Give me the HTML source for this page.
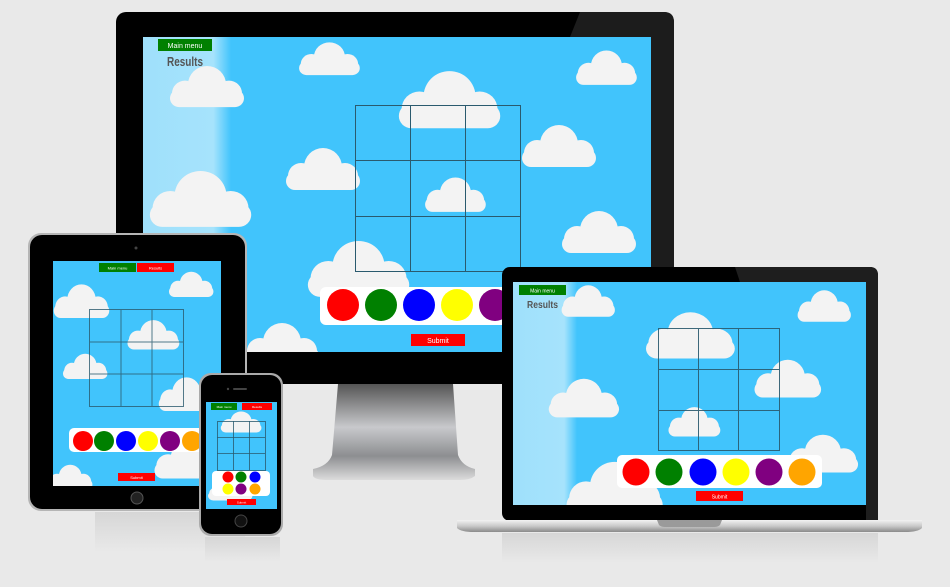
<!DOCTYPE html>
<html><head><meta charset="utf-8"><style>
html,body{margin:0;padding:0;background:#e9e9e9;}
svg{display:block}
text{font-family:"Liberation Sans",sans-serif;}
</style></head><body>
<svg width="950" height="587" viewBox="0 0 950 587" xmlns="http://www.w3.org/2000/svg">
<defs>
<g id="c">
<circle cx="20" cy="31" r="13" fill="#f3f3f3"/>
<circle cx="42" cy="22" r="19" fill="#f3f3f3"/>
<circle cx="64" cy="31" r="13" fill="#f3f3f3"/>
<rect x="5" y="27" width="74" height="18" rx="9" fill="#f3f3f3"/>
</g>
<linearGradient id="st" x1="0" y1="0" x2="0" y2="1">
<stop offset="0" stop-color="#555"/><stop offset="0.45" stop-color="#c8c9cc"/><stop offset="0.75" stop-color="#8d8e91"/><stop offset="1" stop-color="#dcdcdc"/>
</linearGradient>
<linearGradient id="strip" x1="0" y1="0" x2="1" y2="0">
<stop offset="0" stop-color="#9fe0fb"/><stop offset="0.8" stop-color="#a6e3fc"/><stop offset="1" stop-color="#41c4fc"/>
</linearGradient>
<linearGradient id="lb" x1="0" y1="0" x2="0" y2="1">
<stop offset="0" stop-color="#f2f2f2"/><stop offset="0.5" stop-color="#c9c9c9"/><stop offset="1" stop-color="#8a8a8a"/>
</linearGradient>
<linearGradient id="rf" x1="0" y1="0" x2="0" y2="1">
<stop offset="0" stop-color="#d6d6d6"/><stop offset="1" stop-color="#e9e9e9"/>
</linearGradient>
<clipPath id="ms"><rect x="143" y="37" width="508" height="315"/></clipPath>
<clipPath id="ts"><rect x="53" y="261" width="168" height="225"/></clipPath>
<clipPath id="ps"><rect x="206" y="402" width="71" height="107"/></clipPath>
<clipPath id="ls"><rect x="513" y="282" width="353" height="223"/></clipPath>
</defs>

<!-- reflections -->
<rect x="95" y="512" width="150" height="40" fill="url(#rf)"/>
<rect x="205" y="537" width="75" height="25" fill="url(#rf)"/>
<rect x="502" y="533" width="376" height="30" fill="url(#rf)"/>

<!-- MONITOR -->
<path d="M338 384 L453 384 L458 455 Q462 466 475 469 L475 476 Q470 480 460 480 L328 480 Q315 480 313 476 L313 469 Q328 466 332 455 Z" fill="url(#st)"/>
<rect x="116" y="12" width="558" height="372" rx="10" fill="#000"/>
<path d="M580 12 L664 12 Q674 12 674 22 L674 384 L651 384 L651 37 L570 37 Z" fill="#1c1c1c"/>
<g clip-path="url(#ms)">
<rect x="143" y="37" width="508" height="315" fill="#41c4fc"/>
<rect x="143" y="37" width="88" height="315" fill="url(#strip)"/>
<use href="#c" transform="translate(165,63) scale(1,0.98)"/>
<use href="#c" transform="translate(295,40) scale(0.82,0.78)"/>
<use href="#c" transform="translate(392,67) scale(1.37,1.36)"/>
<use href="#c" transform="translate(572,48) scale(0.82,0.82)"/>
<use href="#c" transform="translate(517,122) scale(1,1)"/>
<use href="#c" transform="translate(281,145) scale(1,1)"/>
<use href="#c" transform="translate(143,167) scale(1.37,1.33)"/>
<use href="#c" transform="translate(421,175) scale(0.82,0.82)"/>
<use href="#c" transform="translate(557,208) scale(1,1)"/>
<use href="#c" transform="translate(301,237) scale(1.37,1.33)"/>
<use href="#c" transform="translate(240,320) scale(1,1)"/>
<g stroke="#2a5a6e" stroke-width="1" fill="none">
<rect x="355.5" y="105.5" width="165" height="166"/>
<line x1="410.5" y1="105" x2="410.5" y2="271"/><line x1="465.5" y1="105" x2="465.5" y2="271"/>
<line x1="355" y1="160.5" x2="520" y2="160.5"/><line x1="355" y1="216.5" x2="520" y2="216.5"/>
</g>
<rect x="320" y="287" width="240" height="38" rx="6" fill="#fff"/>
<circle cx="343" cy="305" r="16" fill="#f00"/><circle cx="381" cy="305" r="16" fill="#008000"/>
<circle cx="419" cy="305" r="16" fill="#00f"/><circle cx="457" cy="305" r="16" fill="#ff0"/>
<circle cx="495" cy="305" r="16" fill="#800080"/>
<rect x="411" y="334" width="54" height="12" fill="#f00"/>
<text x="438" y="343" font-size="7" fill="#fff" text-anchor="middle">Submit</text>
<rect x="158" y="39" width="54" height="12" fill="#008000"/>
<text x="185" y="48" font-size="7" fill="#fff" text-anchor="middle">Main menu</text>
<text x="167" y="66" font-size="13" font-weight="bold" fill="#555" textLength="36" lengthAdjust="spacingAndGlyphs">Results</text>
</g>

<!-- TABLET -->
<rect x="28" y="233" width="219" height="278" rx="13" fill="#b5b5b5"/>
<rect x="30" y="235" width="215" height="274" rx="12" fill="#000"/>
<circle cx="136" cy="248" r="1.5" fill="#444"/>
<g clip-path="url(#ts)">
<rect x="53" y="261" width="168" height="225" fill="#41c4fc"/>
<use href="#c" transform="translate(166,270) scale(0.6,0.6)"/>
<use href="#c" transform="translate(50,282) scale(0.75,0.8)"/>
<use href="#c" transform="translate(124,318) scale(0.7,0.7)"/>
<use href="#c" transform="translate(60,352) scale(0.6,0.6)"/>
<use href="#c" transform="translate(155,375) scale(0.75,0.8)"/>
<use href="#c" transform="translate(150,438) scale(0.9,0.9)"/>
<use href="#c" transform="translate(45,463) scale(0.6,0.6)"/>
<g stroke="#2a5a6e" stroke-width="1" fill="none" opacity="0.8">
<rect x="89.5" y="309.5" width="94" height="97"/>
<line x1="121" y1="309" x2="121" y2="406"/><line x1="152" y1="309" x2="152" y2="406"/>
<line x1="89" y1="342" x2="183" y2="342"/><line x1="89" y1="374" x2="183" y2="374"/>
</g>
<rect x="69" y="428" width="150" height="24" rx="5" fill="#fff"/>
<circle cx="83" cy="441" r="10" fill="#f00"/><circle cx="104" cy="441" r="10" fill="#008000"/>
<circle cx="126" cy="441" r="10" fill="#00f"/><circle cx="148" cy="441" r="10" fill="#ff0"/>
<circle cx="170" cy="441" r="10" fill="#800080"/><circle cx="192" cy="441" r="10" fill="#ffa500"/>
<rect x="118" y="473" width="37" height="8" fill="#f00"/>
<text x="136.5" y="479" font-size="4" fill="#fff" text-anchor="middle">Submit</text>
<rect x="99" y="263" width="37" height="9" fill="#008000"/>
<text x="117.5" y="269.5" font-size="4" fill="#fff" text-anchor="middle">Main menu</text>
<rect x="137" y="263" width="37" height="9" fill="#f00"/>
<text x="155.5" y="269.5" font-size="4" fill="#fff" text-anchor="middle">Results</text>
</g>
<circle cx="137" cy="498" r="6" fill="#222" stroke="#555"/>

<!-- PHONE -->
<rect x="199" y="373" width="84" height="163" rx="12" fill="#aaa"/>
<rect x="201" y="375" width="80" height="159" rx="11" fill="#000"/>
<rect x="233" y="388" width="14" height="2" rx="1" fill="#444"/><circle cx="228" cy="389" r="1.2" fill="#444"/>
<g clip-path="url(#ps)">
<rect x="206" y="402" width="71" height="107" fill="#41c4fc"/>
<use href="#c" transform="translate(218,410) scale(0.55,0.5)"/>
<use href="#c" transform="translate(205,478) scale(0.6,0.5)"/>
<g stroke="#2a5a6e" stroke-width="0.8" fill="none">
<rect x="217.5" y="421.5" width="48" height="49"/>
<line x1="233.5" y1="421" x2="233.5" y2="470"/><line x1="249.5" y1="421" x2="249.5" y2="470"/>
<line x1="217" y1="437.5" x2="265" y2="437.5"/><line x1="217" y1="453.5" x2="265" y2="453.5"/>
</g>
<rect x="212" y="471" width="58" height="25" rx="4" fill="#fff"/>
<circle cx="228" cy="477" r="5.5" fill="#f00"/><circle cx="241" cy="477" r="5.5" fill="#008000"/><circle cx="255" cy="477" r="5.5" fill="#00f"/>
<circle cx="228" cy="489" r="5.5" fill="#ff0"/><circle cx="241" cy="489" r="5.5" fill="#800080"/><circle cx="255" cy="489" r="5.5" fill="#ffa500"/>
<rect x="227" y="499" width="29" height="6" fill="#f00"/>
<text x="241.5" y="503.5" font-size="3" fill="#fff" text-anchor="middle">Submit</text>
<rect x="211" y="403" width="26" height="7" fill="#008000"/>
<text x="224" y="408" font-size="3" fill="#fff" text-anchor="middle">Main menu</text>
<rect x="242" y="403" width="30" height="7" fill="#f00"/>
<text x="257" y="408" font-size="3" fill="#fff" text-anchor="middle">Results</text>
</g>
<circle cx="241" cy="521" r="6" fill="#111" stroke="#444"/>

<!-- LAPTOP -->
<rect x="502" y="267" width="376" height="254" rx="8" fill="#000"/>
<path d="M735 267 L870 267 Q878 267 878 275 L878 521 L866 521 L866 282 L740 282 Z" fill="#1e1e1e"/>
<g clip-path="url(#ls)">
<rect x="513" y="282" width="353" height="223" fill="#41c4fc"/>
<rect x="513" y="282" width="64" height="223" fill="url(#strip)"/>
<use href="#c" transform="translate(558,283) scale(0.72,0.75)"/>
<use href="#c" transform="translate(794,288) scale(0.72,0.75)"/>
<use href="#c" transform="translate(640,309) scale(1.2,1.1)"/>
<use href="#c" transform="translate(750,357) scale(0.9,0.9)"/>
<use href="#c" transform="translate(544,376) scale(0.95,0.92)"/>
<use href="#c" transform="translate(665,405) scale(0.7,0.7)"/>
<use href="#c" transform="translate(783,432) scale(0.95,0.9)"/>
<use href="#c" transform="translate(560,458) scale(1.3,1.3)"/>
<g stroke="#2a5a6e" stroke-width="1" fill="none" opacity="0.9">
<rect x="658.5" y="328.5" width="121" height="122"/>
<line x1="698.5" y1="328" x2="698.5" y2="451"/><line x1="738.5" y1="328" x2="738.5" y2="451"/>
<line x1="658" y1="369.5" x2="779" y2="369.5"/><line x1="658" y1="410.5" x2="779" y2="410.5"/>
</g>
<rect x="617" y="455" width="205" height="33" rx="5" fill="#fff"/>
<circle cx="636" cy="472" r="13.5" fill="#f00"/><circle cx="669" cy="472" r="13.5" fill="#008000"/>
<circle cx="703" cy="472" r="13.5" fill="#00f"/><circle cx="736" cy="472" r="13.5" fill="#ff0"/>
<circle cx="769" cy="472" r="13.5" fill="#800080"/><circle cx="802" cy="472" r="13.5" fill="#ffa500"/>
<rect x="696" y="491" width="47" height="10" fill="#f00"/>
<text x="719.5" y="498.5" font-size="5" fill="#fff" text-anchor="middle">Submit</text>
<rect x="519" y="285" width="47" height="10" fill="#008000"/>
<text x="542.5" y="292.5" font-size="5" fill="#fff" text-anchor="middle">Main menu</text>
<text x="527" y="308" font-size="10" font-weight="bold" fill="#555" textLength="31" lengthAdjust="spacingAndGlyphs">Results</text>
</g>
<path d="M457 520 L922 520 L922 528 Q918 532 905 532 L474 532 Q461 532 457 528 Z" fill="url(#lb)"/>
<path d="M657 520 L722 520 L720 525 Q718 527 714 527 L665 527 Q661 527 659 525 Z" fill="#9a9a9a"/>
</svg>
</body></html>
